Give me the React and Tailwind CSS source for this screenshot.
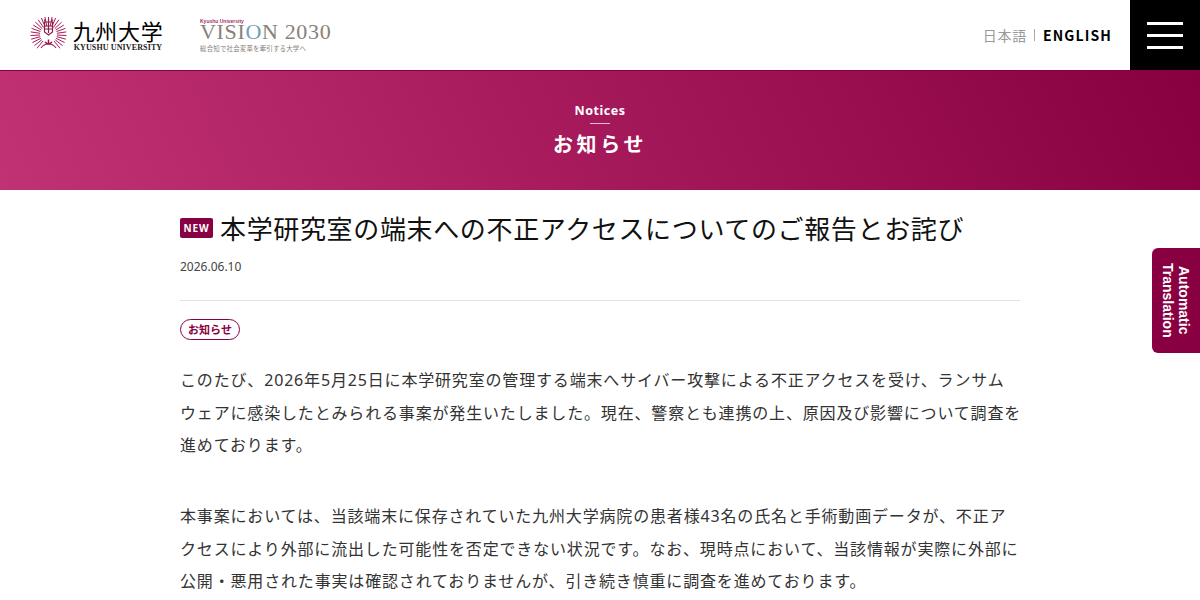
function Crest() {
  const rays = [];
  for (let i = 0; i < 25; i++) {
    const deg = 40 + i * (280 / 24);
    const r = deg * Math.PI / 180;
    const x1 = 18.5 + Math.sin(r) * 8.5, y1 = 17.5 + Math.cos(r) * 8.5;
    const x2 = 18.5 + Math.sin(r) * 18, y2 = 17.5 + Math.cos(r) * 18;
    rays.push(<line key={i} x1={x1} y1={y1} x2={x2} y2={y2} stroke="#a81c5a" strokeWidth="1" />);
  }
  return (
    <svg width="37" height="37" viewBox="0 0 37 37">
      {rays}
      <path d="M14.5 5h8v10l-4 3-4-3z" fill="none" stroke="#8f1d4b" strokeWidth="1.2" />
      <path d="M15 9h7M15 12h7M18.500 5v11" stroke="#8f1d4b" strokeWidth="1.2" />
      <path d="M14 2.500l1.500 2M18.500 1.500v3M23 2.500l-1.500 2" stroke="#8f1d4b" strokeWidth="1.2" />
      <path d="M11 31c2-3 5-4 7.500-4s5.500 1 7.500 4" fill="none" stroke="#a81c5a" strokeWidth="1.200" />
      <path d="M18.500 22.500v4M15 25c1 1 2 2 3.500 2s2.500-1 3.500-2" fill="none" stroke="#8f1d4b" strokeWidth="1.500" />
    </svg>
  );
}

function Para({ lines, className = "" }) {
  return (
    <p className={"text-[16px] leading-[32.64px] tracking-[0.052em] text-[#333] " + className}>
      {lines.map((l) => (
        <span key={l} className="block whitespace-nowrap">{l}</span>
      ))}
    </p>
  );
}

export default function App() {
  return (
    <div className="relative h-[600px] w-[1200px] overflow-hidden bg-white font-['Noto_Sans','Noto_Sans_CJK_JP',sans-serif]">
      <header className="flex h-[70px] items-center">
        <div className="flex items-center pl-[30px]">
          <Crest />
          <div className="ml-[6px] flex w-[90px] flex-col items-center pt-[1px]">
            <span className="font-['Noto_Sans_CJK_JP',serif] text-[22px] leading-[24px] tracking-[0.03em] whitespace-nowrap text-black">九州大学</span>
            <span className="font-['Liberation_Serif',serif] text-[8px] leading-[11px] font-bold tracking-[0.015em] whitespace-nowrap text-[#222]">KYUSHU UNIVERSITY</span>
          </div>
          <div className="ml-[37px] flex flex-col">
            <span className="font-['Liberation_Sans',sans-serif] text-[5px] leading-[6px] font-bold text-[#a3336e]">Kyushu University</span>
            <span className="font-['Liberation_Serif',serif] text-[22px] leading-[15px] tracking-[0.03em] whitespace-nowrap text-[#8a8178]">
              VISI<span className="text-[#6f9fb3]">O</span>N 2030
            </span>
            <span className="mt-[5px] font-['Noto_Sans_CJK_JP',serif] text-[6.500px] leading-[9px] tracking-[0.02em] whitespace-nowrap text-[#8a8178]">総合知で社会変革を牽引する大学へ</span>
          </div>
        </div>
        <div className="ml-auto flex items-center">
          <span className="font-['Noto_Sans_CJK_JP',sans-serif] text-[14px] tracking-[0.05em] text-[#999]">日本語</span>
          <span className="mr-[8px] ml-[7px] h-[12px] w-px bg-[#aaa]" />
          <span className="font-['Noto_Sans_CJK_JP',sans-serif] text-[14px] font-bold tracking-[0.08em] text-black">ENGLISH</span>
        </div>
        <div className="ml-[18px] flex h-[70px] w-[70px] flex-col items-center justify-center gap-[9px] bg-black">
          <span className="h-[3px] w-[36px] bg-white" />
          <span className="h-[3px] w-[36px] bg-white" />
          <span className="h-[3px] w-[36px] bg-white" />
        </div>
      </header>

      <section className="flex h-[120px] flex-col items-center border-t border-[#890042] bg-[linear-gradient(65deg,#c13274,#880040)] pt-[31px] text-white">
        <span className="text-[12.500px] leading-[18px] font-bold tracking-[0.04em]">Notices</span>
        <span className="mt-[3px] h-px w-[20px] bg-white/70" />
        <h1 className="mt-[6px] font-['Noto_Sans_CJK_JP',sans-serif] text-[20px] leading-[28px] font-bold tracking-[0.18em]">お知らせ</h1>
      </section>

      <main className="mx-auto w-[840px]">
        <div className="mt-[20px] flex items-center">
          <span className="flex h-[20px] w-[33px] items-center justify-center rounded-[2px] bg-[#890042] text-[10px] font-bold tracking-[0.08em] text-white">NEW</span>
          <h2 className="ml-[7px] font-['Noto_Sans_CJK_JP',sans-serif] text-[26px] leading-[36px] tracking-[0.025em] whitespace-nowrap text-[#111]">本学研究室の端末への不正アクセスについてのご報告とお詫び</h2>
        </div>
        <div className="mt-[12px] text-[12px] leading-[18px] text-[#444]">2026.06.10</div>
        <div className="mt-[24px] h-px bg-[#e2e2e2]" />
        <div className="mt-[18px] flex">
          <span className="flex h-[21px] w-[60px] items-center justify-center rounded-full border border-[#890042] bg-white font-['Noto_Sans_CJK_JP',sans-serif] text-[11px] font-bold text-[#890042]">お知らせ</span>
        </div>
        <Para
          className="mt-[24px]"
          lines={[
            "このたび、2026年5月25日に本学研究室の管理する端末へサイバー攻撃による不正アクセスを受け、ランサム",
            "ウェアに感染したとみられる事案が発生いたしました。現在、警察とも連携の上、原因及び影響について調査を",
            "進めております。",
          ]}
        />
        <Para
          className="mt-[38px]"
          lines={[
            "本事案においては、当該端末に保存されていた九州大学病院の患者様43名の氏名と手術動画データが、不正ア",
            "クセスにより外部に流出した可能性を否定できない状況です。なお、現時点において、当該情報が実際に外部に",
            "公開・悪用された事実は確認されておりませんが、引き続き慎重に調査を進めております。",
          ]}
        />
      </main>

      <div className="absolute top-[248px] right-0 flex h-[105px] w-[48px] items-center justify-center rounded-l-[6px] bg-[#890042] font-['Liberation_Sans',sans-serif] text-[14px] leading-[16px] font-bold text-white [writing-mode:vertical-rl]">
        <span className="text-center">Automatic<br />Translation</span>
      </div>
    </div>
  );
}
